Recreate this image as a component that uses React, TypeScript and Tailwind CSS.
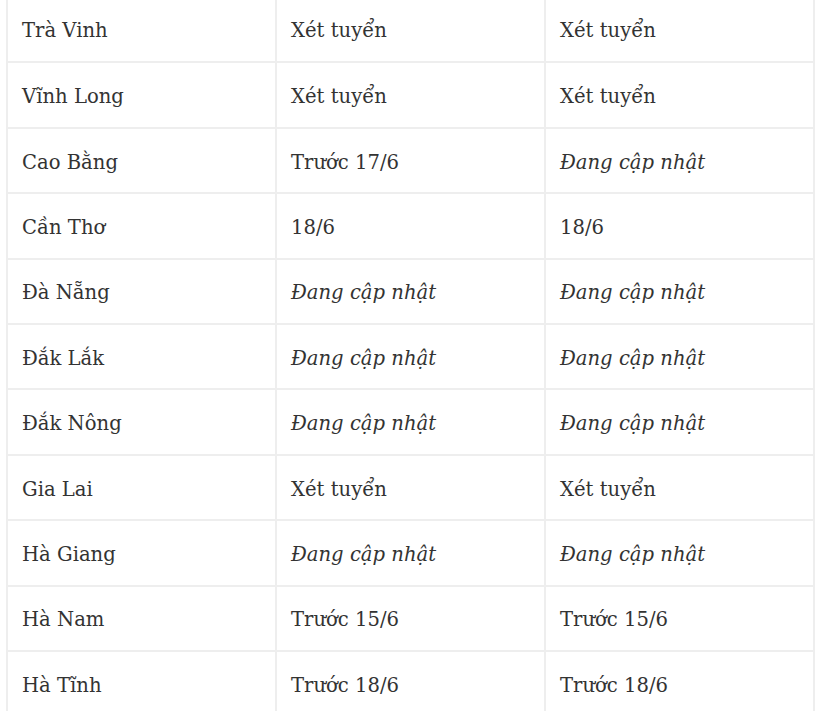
import React from 'react';

type Cell = { text: string; pending?: boolean };

const PENDING = 'Đang cập nhật';

const rows: [string, string, string][] = [
  ['Trà Vinh', 'Xét tuyển', 'Xét tuyển'],
  ['Vĩnh Long', 'Xét tuyển', 'Xét tuyển'],
  ['Cao Bằng', 'Trước 17/6', PENDING],
  ['Cần Thơ', '18/6', '18/6'],
  ['Đà Nẵng', PENDING, PENDING],
  ['Đắk Lắk', PENDING, PENDING],
  ['Đắk Nông', PENDING, PENDING],
  ['Gia Lai', 'Xét tuyển', 'Xét tuyển'],
  ['Hà Giang', PENDING, PENDING],
  ['Hà Nam', 'Trước 15/6', 'Trước 15/6'],
  ['Hà Tĩnh', 'Trước 18/6', 'Trước 18/6'],
];

const App: React.FC = () => {
  return (
    <div className="h-[711px] overflow-hidden bg-white pl-[6px] pr-[5px]">
      <table
        className="-mt-[3px] w-full table-fixed border-collapse text-[19.6px] text-[#333333]"
        style={{ fontFamily: '"DejaVu Serif", "Liberation Serif", serif' }}
      >
        <tbody>
          {rows.map((row, i) => (
            <tr key={i}>
              {row.map((text, j) => {
                const cell: Cell = { text, pending: text === PENDING };
                return (
                  <td
                    key={j}
                    className={`h-[65.4px] border-x-2 border-b-2 border-[#eeeeee] pl-[14px] pr-[15px] pt-[4px] align-middle leading-none ${
                      cell.pending ? 'italic' : ''
                    }`}
                  >
                    {cell.text}
                  </td>
                );
              })}
            </tr>
          ))}
        </tbody>
      </table>
    </div>
  );
};

export default App;
